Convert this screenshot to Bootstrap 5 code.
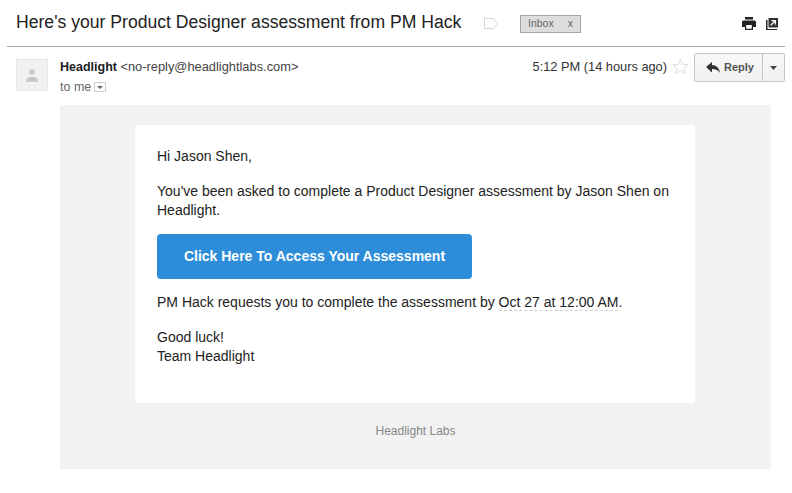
<!DOCTYPE html>
<html lang="en">

<head>
    <meta charset="UTF-8" />
    <title>Here's your Product Designer assessment</title>
    <link rel="stylesheet" href="https://cdn.jsdelivr.net/npm/bootstrap@5.3.3/dist/css/bootstrap.min.css" />
    <style>
        body { font-family: "Liberation Sans", Arial, sans-serif; color: #222; background: #fff; overflow: hidden; }
        .mail-wrap { width: 785px; padding-left: 7px; }
        .subject-bar { height: 47px; border-bottom: 1px solid #a6a6a6; padding: 0 6px 3px 9px; }
        .subject { font-size: 17.6px; line-height: 22px; color: #222; margin: 0; font-weight: 400; width: 468px; flex: none; }
        .label-tag { flex: none; margin-right: 22px; margin-top: 3px; }
        .inbox-chip { width: 61px; height: 18px; margin-top: 4px; background: #ddd; border: 1px solid #a3a3a3; font-size: 10.5px; color: #666; padding: 0 7px; }
        .head-icons { gap: 10px; margin-top: 4px; margin-right: 1px; }
        .sender-row { padding: 12px 0 0 9px; height: 58px; }
        .avatar { width: 32px; height: 32px; background: #f1f1f1; border: 1px solid #e6e6e6; margin-right: 12px; }
        .sender-text { font-size: 12.5px; line-height: 20px; margin-top: -2px; }
        .sender-mail { color: #444; font-size: 12.85px; }
        .to-me { color: #666; }
        .to-caret { width: 12px; height: 10px; border: 1px solid #ccc; border-radius: 1px; margin-left: 3px; vertical-align: -1px; }
        .time-box { font-size: 12.8px; color: #333; margin-top: -2px; line-height: 20px; }
        .star-icon { flex: none; margin-left: 5px; margin-top: -1px; }
        .reply-group { width: 91px; height: 29px; margin-top: -6px; margin-left: 5px; border: 1px solid #c6c6c6; border-radius: 2px; background: linear-gradient(#f8f8f8, #f1f1f1); }
        .reply-main { width: 68px; padding-left: 3px; border-right: 1px solid #c6c6c6; font-size: 11px; font-weight: 700; color: #555; gap: 4px; }
        .reply-drop { flex: 1; }
        .mail-body { width: 711px; height: 364px; margin-left: 53px; background: #f2f2f2; padding-top: 20px; }
        .mail-sheet { width: 560px; height: 278px; margin-left: 75px; background: #fff; border-radius: 3px; padding: 22px 22px 0; font-size: 14px; line-height: 19px; color: #222; }
        .mail-sheet p { margin-bottom: 16px; }
        .mail-sheet p.before-cta { margin-bottom: 14px; }
        .cta { display: flex; width: 315px; height: 45px; background: #2d8dd9; color: #fff; font-weight: 700; font-size: 14px; border: 0; border-radius: 4px; margin-bottom: 14px; text-decoration: none; }
        .date-mark { display: inline-block; line-height: 15px; border-bottom: 1px dashed #ccc; }
        .foot-note { font-size: 12px; color: #888; margin-top: 19px; }
    </style>
</head>

<body>
    <div class="mail-wrap">
        <!--Subject-->
        <div class="subject-bar d-flex align-items-center">
            <h1 class="subject text-nowrap">Here's your Product Designer assessment from PM Hack</h1>
            <svg class="label-tag" width="14" height="11" viewBox="0 0 14 11"><path d="M.5.5h9l4 5-4 5h-9z" fill="#fff" stroke="#d6d6d6" /></svg>
            <div class="inbox-chip d-flex align-items-center justify-content-between"><span>Inbox</span><span>x</span></div>
            <div class="head-icons d-flex align-items-center ms-auto">
                <svg width="14" height="13" viewBox="0 0 14 13"><path fill="#222" fill-rule="evenodd" d="M3 0h8v2.500H3zM1.500 3.500h11A1.500 1.500 0 0 1 14 5v5h-3v3H3v-3H0V5A1.500 1.500 0 0 1 1.500 3.500zM4.200 8v3.700h5.600V8z" /></svg>
                <svg width="12" height="12" viewBox="0 0 12 12"><path fill="#222" d="M0 2h1.500v9H11v1H0z" /><path fill="#333" fill-rule="evenodd" d="M2.500 0H12v9.500H2.500zM5.500 2v1.300h2.300L4.200 6.900l.9.900 3.600-3.600v2.300H10V2z" /></svg>
            </div>
        </div>

        <!--Sender-->
        <div class="sender-row d-flex align-items-start">
            <div class="avatar d-flex align-items-center justify-content-center">
                <svg width="12" height="13" viewBox="0 0 12 13"><circle cx="6" cy="3" r="2.800" fill="#c9c9c9" /><path fill="#c9c9c9" d="M0 13v-2c0-2 3-3.300 6-3.300s6 1.300 6 3.300v2z" /></svg>
            </div>
            <div class="sender-text">
                <div><b>Headlight</b> <span class="sender-mail">&lt;no-reply@headlightlabs.com&gt;</span></div>
                <div class="to-me d-flex align-items-center">to me <span class="to-caret d-inline-flex align-items-center justify-content-center"><svg width="6" height="3" viewBox="0 0 6 3"><path d="M0 0h6L3 3z" fill="#666" /></svg></span></div>
            </div>
            <div class="time-box ms-auto text-nowrap">5:12 PM (14 hours ago)</div>
            <svg class="star-icon" width="17" height="17" viewBox="0 0 17 17"><path d="M8.500 1l2 5.300 5.700.3-4.400 3.600 1.500 5.500-4.800-3.100-4.800 3.100 1.500-5.500L.8 6.600l5.700-.3z" fill="none" stroke="#ddd" /></svg>
            <div class="reply-group d-flex">
                <div class="reply-main d-flex align-items-center justify-content-center">
                    <svg width="14" height="11" viewBox="0 0 14 11"><path fill="#333" d="M6 0v3c5 .4 7.500 3.500 8 8-1.500-2.800-4-4-8-4v3.500L0 5z" /></svg>
                    <span>Reply</span>
                </div>
                <div class="reply-drop d-flex align-items-center justify-content-center"><svg width="7" height="4" viewBox="0 0 7 4"><path d="M0 0h7L3.500 4z" fill="#444" /></svg></div>
            </div>
        </div>

        <!--Message-->
        <div class="mail-body">
            <div class="mail-sheet">
                <p>Hi Jason Shen,</p>
                <p class="before-cta">You've been asked to complete a Product Designer assessment by Jason Shen on Headlight.</p>
                <a class="cta align-items-center justify-content-center" href="#">Click Here To Access Your Assessment</a>
                <p>PM Hack requests you to complete the assessment by <span class="date-mark">Oct 27 at 12:00 AM</span>.</p>
                <p class="mb-0">Good luck!<br />Team Headlight</p>
            </div>
            <div class="foot-note text-center">Headlight Labs</div>
        </div>
    </div>

    <script src="https://cdn.jsdelivr.net/npm/bootstrap@5.3.3/dist/js/bootstrap.bundle.min.js"></script>
</body>

</html>
